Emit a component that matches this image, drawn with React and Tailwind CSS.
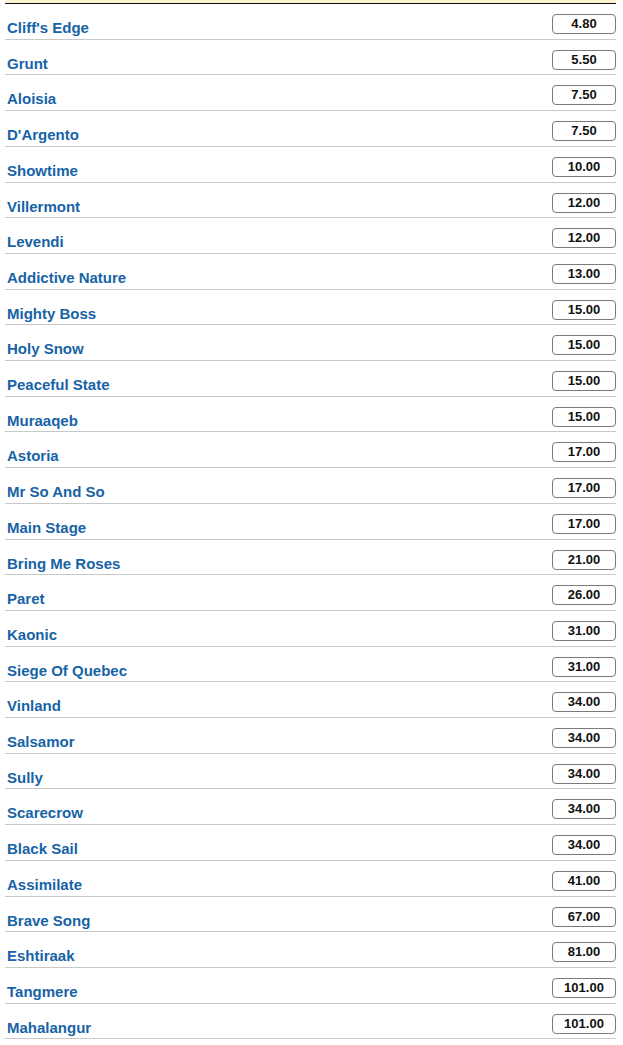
const runners = [
  ["Cliff's Edge", "4.80"],
  ["Grunt", "5.50"],
  ["Aloisia", "7.50"],
  ["D'Argento", "7.50"],
  ["Showtime", "10.00"],
  ["Villermont", "12.00"],
  ["Levendi", "12.00"],
  ["Addictive Nature", "13.00"],
  ["Mighty Boss", "15.00"],
  ["Holy Snow", "15.00"],
  ["Peaceful State", "15.00"],
  ["Muraaqeb", "15.00"],
  ["Astoria", "17.00"],
  ["Mr So And So", "17.00"],
  ["Main Stage", "17.00"],
  ["Bring Me Roses", "21.00"],
  ["Paret", "26.00"],
  ["Kaonic", "31.00"],
  ["Siege Of Quebec", "31.00"],
  ["Vinland", "34.00"],
  ["Salsamor", "34.00"],
  ["Sully", "34.00"],
  ["Scarecrow", "34.00"],
  ["Black Sail", "34.00"],
  ["Assimilate", "41.00"],
  ["Brave Song", "67.00"],
  ["Eshtiraak", "81.00"],
  ["Tangmere", "101.00"],
  ["Mahalangur", "101.00"],
];

export default function App() {
  return (
    <div className="w-[623px] h-[1045px] bg-white font-['Liberation_Sans',Arial,sans-serif]">
      <div className="ml-[5px] w-[611px]">
        <div className="h-[3px] bg-[#fdf3cf]" />
        <div className="h-[1px] bg-[#111]" />
        {runners.map(([name, price]) => (
          <div
            key={name}
            className="flex items-start justify-between h-[35.71px] border-b border-[#c8c8c8]"
          >
            <span className="mt-[15px] pl-[2px] text-[15px] leading-[17px] font-bold text-[#1763a6]">
              {name}
            </span>
            <button className="mt-[10px] w-[64px] h-[20px] rounded-[4px] border border-[#7a7a7a] bg-white text-[13px] leading-[18px] font-bold text-[#111] text-center">
              {price}
            </button>
          </div>
        ))}
      </div>
    </div>
  );
}
